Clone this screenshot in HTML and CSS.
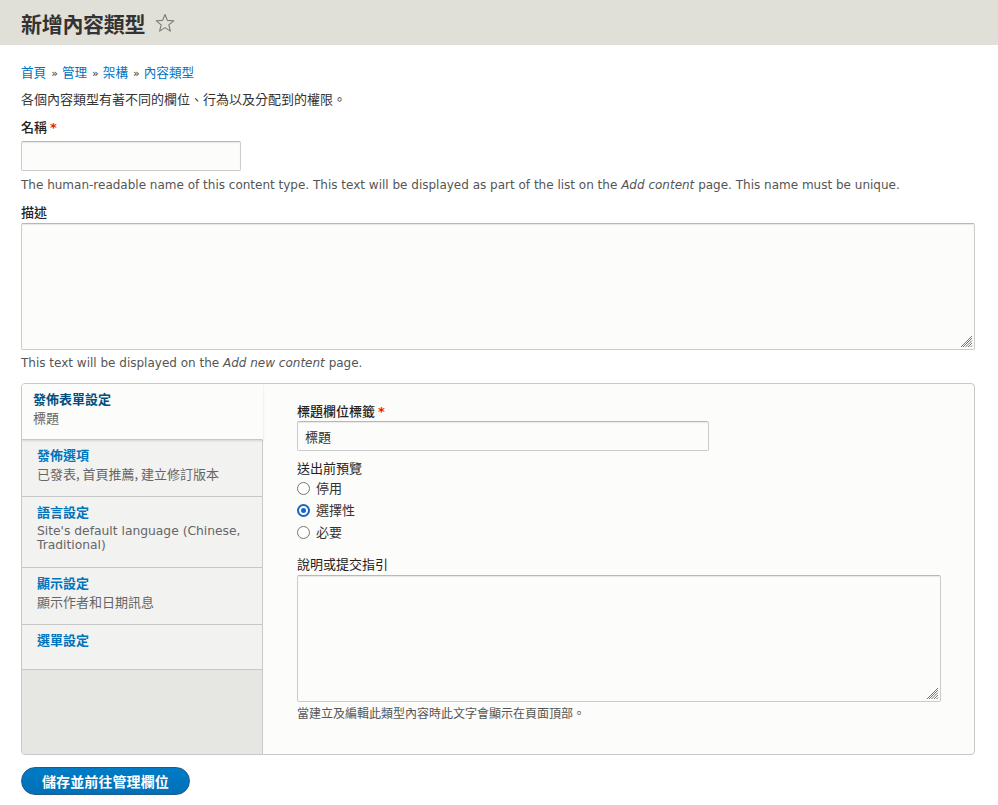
FILE: index.html
```html
<!DOCTYPE html>
<html lang="zh-Hant">
<head>
<meta charset="utf-8">
<title>新增內容類型</title>
<link rel="stylesheet" href="styles.css">
</head>
<body>
<header class="page-header">
  <h1 class="page-title">新增內容類型</h1>
  <svg class="star" width="20" height="20" viewBox="0 0 20 20"><path d="M10 1.5 L12.4 7.4 L18.7 7.8 L13.8 11.9 L15.4 18.1 L10 14.6 L4.6 18.1 L6.2 11.9 L1.3 7.8 L7.6 7.4 Z" fill="none" stroke="#7a7a74" stroke-width="1.1" stroke-linejoin="round"/></svg>
</header>
<main class="content">
  <nav class="breadcrumb"><a href="#">首頁</a><span class="sep">»</span><a href="#">管理</a><span class="sep">»</span><a href="#">架構</a><span class="sep">»</span><a href="#">內容類型</a></nav>
  <p class="intro">各個內容類型有著不同的欄位、行為以及分配到的權限。</p>

  <div class="field field-name">
    <label class="label">名稱 <span class="req">*</span></label>
    <input class="text-input name-input" type="text">
    <div class="description">The human-readable name of this content type. This text will be displayed as part of the list on the <em>Add content</em> page. This name must be unique.</div>
  </div>

  <div class="field field-desc">
    <label class="label">描述</label>
    <div class="ta-wrap ta-main">
      <textarea class="textarea"></textarea>
      <svg class="grip" width="12" height="12" viewBox="0 0 12 12"><path d="M11 2 L2 11 M11 4.5 L4.5 11 M11 7 L7 11 M11 9.5 L9.5 11 M11 0 L0 11" stroke="#777" stroke-width="1"/></svg>
    </div>
    <div class="description">This text will be displayed on the <em>Add new content</em> page.</div>
  </div>

  <div class="vtabs">
    <ul class="vtabs-menu">
      <li class="vtab selected"><a class="vtab-title" href="#">發佈表單設定</a><div class="vtab-summary">標題</div></li>
      <li class="vtab"><a class="vtab-title" href="#">發佈選項</a><div class="vtab-summary">已發表, 首頁推薦, 建立修訂版本</div></li>
      <li class="vtab"><a class="vtab-title" href="#">語言設定</a><div class="vtab-summary vtab-summary-en">Site's default language (Chinese, Traditional)</div></li>
      <li class="vtab"><a class="vtab-title" href="#">顯示設定</a><div class="vtab-summary">顯示作者和日期訊息</div></li>
      <li class="vtab vtab-last"><a class="vtab-title" href="#">選單設定</a></li>
      <li class="vtab-filler"></li>
    </ul>
    <div class="vtabs-pane">
      <label class="label">標題欄位標籤 <span class="req">*</span></label>
      <input class="text-input title-input" type="text" value="標題">
      <div class="label preview-label">送出前預覽</div>
      <div class="radios">
        <div class="radio"><span class="radio-btn"></span>停用</div>
        <div class="radio"><span class="radio-btn checked"></span>選擇性</div>
        <div class="radio"><span class="radio-btn"></span>必要</div>
      </div>
      <label class="label help-label">說明或提交指引</label>
      <div class="ta-wrap ta-help">
        <textarea class="textarea"></textarea>
        <svg class="grip" width="12" height="12" viewBox="0 0 12 12"><path d="M11 2 L2 11 M11 4.5 L4.5 11 M11 7 L7 11 M11 9.5 L9.5 11 M11 0 L0 11" stroke="#777" stroke-width="1"/></svg>
      </div>
      <div class="description cjk-desc">當建立及編輯此類型內容時此文字會顯示在頁面頂部。</div>
    </div>
  </div>

  <button class="button-primary" type="button">儲存並前往管理欄位</button>
</main>
</body>
</html>
```
FILE: styles.css
```css
* { box-sizing: border-box; }
html, body { margin: 0; padding: 0; background: #fff; }
body {
  font-family: "DejaVu Sans", "Noto Sans CJK TC", sans-serif;
  font-size: 13px;
  line-height: 18px;
  color: #333;
}
a { color: #0074bd; text-decoration: none; }

.page-header {
  background: #e0e0d8;
  height: 45px;
  display: flex;
  align-items: center;
  padding-left: 21px;
}
.page-title {
  margin: 0;
  font-family: "Noto Sans CJK TC", sans-serif;
  font-size: 21px;
  font-weight: 700;
  color: #333;
  line-height: 26px;
  letter-spacing: -0.3px;
}
.star { margin-left: 10px; margin-top: 1px; }

.content { padding: 0 23px 0 21px; }

.breadcrumb {
  margin-top: 18px;
  height: 18px;
  font-family: "Noto Sans CJK TC", sans-serif;
  font-size: 12.6px;
  line-height: 18px;
  color: #333;
}
.breadcrumb .sep {
  font-family: "DejaVu Sans", sans-serif;
  font-size: 11px;
  line-height: 10px;
  padding: 0 4px 0 5px;
}
.intro {
  margin: 9px 0 0;
  font-family: "Noto Sans CJK TC", sans-serif;
  font-size: 13px;
}

.label {
  display: block;
  font-family: "Noto Sans CJK TC", sans-serif;
  font-weight: 500;
  font-size: 13px;
  line-height: 18px;
  color: #222;
}
.req { color: #e32700; font-family: "DejaVu Sans", sans-serif; font-weight: 700; }

.field-name { margin-top: 10px; }
.field-name .label { margin-bottom: 4px; }
.text-input {
  display: block;
  height: 30px;
  border: 1px solid #ccc;
  border-top-color: #b8b8b8;
  border-radius: 2px;
  background: #fcfcfa;
  font-family: "Noto Sans CJK TC", sans-serif;
  font-size: 13px;
  color: #333;
  padding: 4px 7px;
  box-shadow: inset 0 1px 1px rgba(0,0,0,0.08);
}
.name-input { width: 220px; }
.description {
  font-size: 12px;
  line-height: 14px;
  color: #555;
  margin-top: 7px;
}
.field-desc { margin-top: 11px; }
.field-desc .label { margin-bottom: 2px; }

.ta-wrap { position: relative; }
.textarea {
  display: block;
  width: 100%;
  border: 1px solid #ccc;
  border-top-color: #b8b8b8;
  border-radius: 2px;
  background: #fcfcfa;
  resize: none;
  margin: 0;
  box-shadow: inset 0 1px 1px rgba(0,0,0,0.08);
}
.ta-main .textarea { height: 127px; }
.grip { position: absolute; right: 2px; bottom: 2px; }

.field-desc .description { margin-top: 6px; }

.vtabs {
  display: flex;
  margin-top: 13px;
  border: 1px solid #c8c8c8;
  border-radius: 4px;
  background: #fcfcfa;
  height: 372px;
  overflow: hidden;
}
.vtabs-menu {
  list-style: none;
  margin: 0;
  padding: 0;
  width: 241px;
  display: flex;
  flex-direction: column;
  flex-shrink: 0;
}
.vtab {
  background: #f2f2f0;
  border-bottom: 1px solid #c8c8c8;
  border-right: 1px solid #c8c8c8;
  padding: 6px 10px 15px 15px;
}
.vtab.selected {
  background: #fcfcfa;
  border-right-color: transparent;
  padding-left: 11px;
  padding-bottom: 14px;
  border-bottom-color: #c8c8c8;
  box-shadow: 0 1px 2px rgba(0,0,0,0.12);
  position: relative;
  z-index: 1;
}
.vtab-title {
  display: block;
  font-family: "Noto Sans CJK TC", sans-serif;
  font-weight: 700;
  font-size: 13px;
  line-height: 18px;
  color: #0074bd;
}
.vtab.selected .vtab-title { color: #004f80; }
.vtab-summary {
  font-family: "Noto Sans CJK TC", sans-serif;
  font-size: 13px;
  line-height: 14px;
  margin-top: 3px;
  color: #666;
}
.vtab-summary-en {
  font-family: "DejaVu Sans", sans-serif;
  font-size: 12.3px;
}
.vtab-last { padding-bottom: 20px; }
.vtab-filler {
  flex: 1;
  background: #e6e6e2;
  border-right: 1px solid #c8c8c8;
}

.vtabs-pane {
  flex: 1;
  padding: 18px 34px 0 34px;
}
.title-input { width: 412px; margin-top: 0; }
.preview-label { margin-top: 8px; font-weight: 400; }
.radios { margin-top: 0; }
.radio {
  display: flex;
  align-items: center;
  height: 22px;
  font-family: "Noto Sans CJK TC", sans-serif;
  font-size: 13px;
}
.radio-btn {
  width: 13px;
  height: 13px;
  border-radius: 50%;
  border: 1.5px solid #767676;
  background: #fff;
  margin-right: 6px;
  position: relative;
}
.radio-btn.checked { border: 2px solid #1566c6; }
.radio-btn.checked::after {
  content: "";
  position: absolute;
  left: 2px; top: 2px;
  width: 5px; height: 5px;
  border-radius: 50%;
  background: #1566c6;
}
.help-label { margin-top: 12px; font-weight: 400; margin-bottom: 2px; }
.ta-help .textarea { height: 127px; width: 644px; }
.ta-help { width: 644px; }
.cjk-desc {
  font-family: "Noto Sans CJK TC", sans-serif;
  font-size: 12px;
  margin-top: 4px;
}

.button-primary {
  display: block;
  margin-top: 12px;
  height: 28px;
  padding: 0 20px;
  border: 1px solid #1e5c90;
  border-radius: 20px;
  background: linear-gradient(#007bc6, #0071b8);
  color: #fff;
  font-family: "Noto Sans CJK TC", sans-serif;
  font-weight: 700;
  font-size: 14px;
  line-height: 26px;
  letter-spacing: 0.1px;
}
```
